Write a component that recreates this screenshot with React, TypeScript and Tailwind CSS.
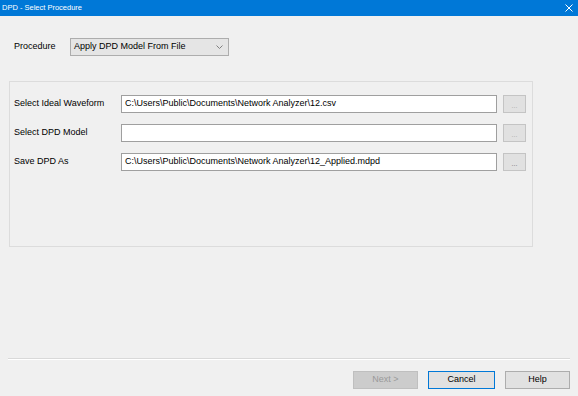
import React from 'react';

const font = { fontFamily: '"Liberation Sans", Arial, sans-serif' };

const PathRow: React.FC<{ label: string; value: string; enabled?: boolean }> = ({ label, value, enabled }) => (
  <div className="flex items-center h-[18px]">
    <div className="w-[111px] pl-[4px] text-[9px] text-black whitespace-nowrap">{label}</div>
    <div className="w-[376px] h-[18px] bg-white border border-[#9f9f9f] flex items-center pl-[3px] text-[9px] text-black whitespace-nowrap overflow-hidden">
      {value}
    </div>
    <button
      className={`ml-[6px] w-[23px] h-[18px] bg-[#e1e1e1] border border-[#c4c4c4] flex items-end justify-center pb-[3px] text-[7px] leading-none ${
        enabled ? 'text-[#6d6d6d]' : 'text-[#a8a8a8]'
      }`}
    >
      ...
    </button>
  </div>
);

export default function App() {
  return (
    <div className="w-[578px] h-[396px] bg-[#f0f0f0] flex flex-col overflow-hidden" style={font}>
      {/* Title bar */}
      <div className="h-[16px] bg-[#0078d7] flex items-center justify-between pl-[2px] pr-[5px] text-white text-[7.5px]">
        <span>DPD - Select Procedure</span>
        <svg width="8" height="8" viewBox="0 0 8 8">
          <path d="M0.5 0.5L7.5 7.5M7.5 0.5L0.5 7.5" stroke="white" strokeWidth="1" />
        </svg>
      </div>

      {/* Procedure selector */}
      <div className="flex items-center mt-[22px] h-[18px]">
        <span className="pl-[14px] w-[70px] text-[9px] text-black">Procedure</span>
        <div className="w-[159px] h-[18px] bg-[#e5e5e5] border border-[#adadad] flex items-center justify-between pl-[3px] pr-[5px] text-[9px] text-black">
          <span>Apply DPD Model From File</span>
          <svg width="7" height="4" viewBox="0 0 7 4">
            <path d="M0.5 0.5L3.5 3.5L6.5 0.5" stroke="#808080" fill="none" strokeWidth="1" />
          </svg>
        </div>
      </div>

      {/* Paths panel */}
      <div className="ml-[9px] mt-[25px] w-[524px] h-[166px] border border-[#dcdcdc] pt-[13px] flex flex-col gap-[11px]">
        <PathRow label="Select Ideal Waveform" value="C:\Users\Public\Documents\Network Analyzer\12.csv" />
        <PathRow label="Select DPD Model" value="" />
        <PathRow label="Save DPD As" value="C:\Users\Public\Documents\Network Analyzer\12_Applied.mdpd" enabled />
      </div>

      <div className="flex-1" />

      {/* Separator */}
      <div className="mx-[8px] h-[2px] border-t border-[#d9d9d9] border-b border-b-white" />

      {/* Buttons */}
      <div className="flex justify-end gap-[10px] pr-[8px] mt-[11px] mb-[7px]">
        <button className="w-[65px] h-[18px] bg-[#cccccc] border border-[#bfbfbf] text-[9px] text-[#9a9a9a]">Next &gt;</button>
        <button className="w-[67px] h-[18px] bg-[#e1e1e1] border border-[#0078d7] text-[9px] text-black">Cancel</button>
        <button className="w-[65px] h-[18px] bg-[#e1e1e1] border border-[#adadad] text-[9px] text-black">Help</button>
      </div>
    </div>
  );
}
